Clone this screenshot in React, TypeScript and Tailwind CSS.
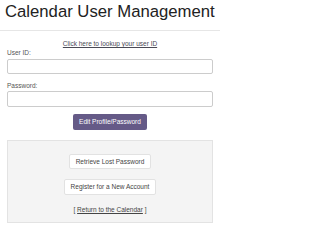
import React from 'react';

export default function App() {
  return (
    <div className="w-[220px] h-[229px] bg-white overflow-hidden font-['Liberation_Sans',Arial,sans-serif] text-[#333]">
      <h1 className="pl-[5px] pt-[2px] text-[16.7px] leading-[20px] text-[#222] whitespace-nowrap">
        Calendar User Management
      </h1>
      <hr className="mt-[8px] border-t border-[#e6e6e6]" />

      <div className="px-[7px]">
        <div className="mt-[9px] text-center text-[6.5px] leading-[8px]">
          <a href="#" className="underline text-[#4a4a55]">Click here to lookup your user ID</a>
        </div>

        <label className="block mt-[1px] text-[6.5px] leading-[8px] text-[#555]">User ID:</label>
        <input
          type="text"
          className="block mt-[2px] w-full h-[15px] rounded-[2px] border border-[#ccc] bg-white"
        />

        <label className="block mt-[8px] text-[6.5px] leading-[8px] text-[#555]">Password:</label>
        <input
          type="password"
          className="block mt-[1px] w-full h-[16px] rounded-[2px] border border-[#ccc] bg-white"
        />

        <div className="mt-[7px] flex justify-center">
          <button className="w-[74px] h-[16px] rounded-[2px] bg-[#655a87] text-white text-[6.5px] leading-[8px]">
            Edit Profile/Password
          </button>
        </div>

        <div className="mt-[10px] h-[83px] border border-[#e3e3e3] bg-[#f4f4f4] flex flex-col items-center pt-[13px]">
          <button className="w-[82px] h-[15px] rounded-[2px] border border-[#e2e2e2] bg-white text-[6.5px] leading-[8px] text-[#444]">
            Retrieve Lost Password
          </button>
          <button className="mt-[10px] w-[92px] h-[16px] rounded-[2px] border border-[#e2e2e2] bg-white text-[6.5px] leading-[8px] text-[#444]">
            Register for a New Account
          </button>
          <div className="mt-[11px] text-[6.5px] leading-[8px] text-[#444]">
            [ <a href="#" className="underline">Return to the Calendar</a> ]
          </div>
        </div>
      </div>
    </div>
  );
}
